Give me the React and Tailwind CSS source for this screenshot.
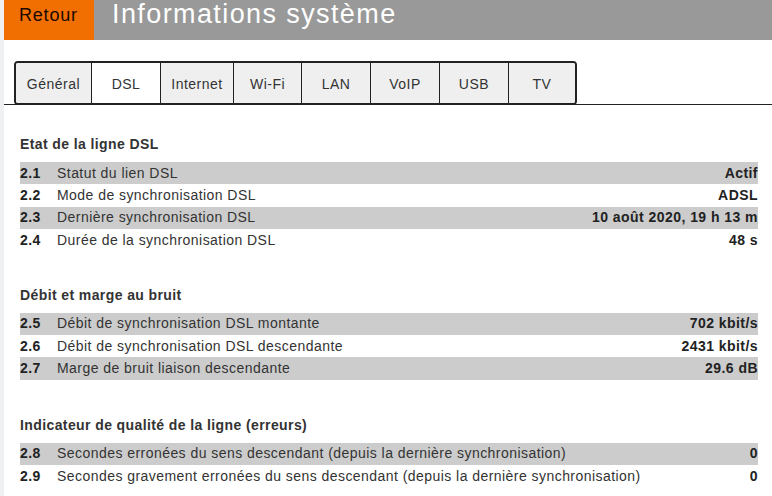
import React from "react";

const tabs = [
  { name: "Général", w: "w-[75px]" },
  { name: "DSL", w: "w-[69px]", active: true },
  { name: "Internet", w: "w-[73px]" },
  { name: "Wi-Fi", w: "w-[68px]" },
  { name: "LAN", w: "w-[69px]" },
  { name: "VoIP", w: "w-[69px]" },
  { name: "USB", w: "w-[69px]" },
  { name: "TV", w: "w-[67px]" },
];

const sections = [
  {
    title: "Etat de la ligne DSL",
    mt: "mt-[31px]",
    rows: [
      ["2.1", "Statut du lien DSL", "Actif"],
      ["2.2", "Mode de synchronisation DSL", "ADSL"],
      ["2.3", "Dernière synchronisation DSL", "10 août 2020, 19 h 13 m"],
      ["2.4", "Durée de la synchronisation DSL", "48 s"],
    ],
  },
  {
    title: "Débit et marge au bruit",
    mt: "mt-[35px]",
    rows: [
      ["2.5", "Débit de synchronisation DSL montante", "702 kbit/s"],
      ["2.6", "Débit de synchronisation DSL descendante", "2431 kbit/s"],
      ["2.7", "Marge de bruit liaison descendante", "29.6 dB"],
    ],
  },
  {
    title: "Indicateur de qualité de la ligne (erreurs)",
    mt: "mt-[37px]",
    rows: [
      ["2.8", "Secondes erronées du sens descendant (depuis la dernière synchronisation)", "0"],
      ["2.9", "Secondes gravement erronées du sens descendant (depuis la dernière synchronisation)", "0"],
    ],
  },
];

export default function App() {
  return (
    <div
      className="flex w-[772px] h-[496px] overflow-hidden bg-white text-[#333]"
      style={{ fontFamily: '"Liberation Sans", Arial, sans-serif' }}
    >
      <div className="w-[4px] shrink-0 bg-[#eef0f2]" />
      <div className="flex-1 flex flex-col">
        <div className="flex h-[40px] bg-[#999999]">
          <div className="w-[90px] bg-[#f16e00] pl-[15px] pt-[6px] text-[18px] leading-none tracking-[0.8px] text-[#1a0a00]">
            Retour
          </div>
          <div className="pl-[18px] pt-[1px] text-[27px] leading-none tracking-[1.4px] text-white">
            Informations système
          </div>
        </div>
        <div className="mt-[21px] border-b border-[#222] pl-[10px] flex">
          <div className="flex h-[44px] border-2 border-[#222] rounded-[4px] overflow-hidden -mb-px">
            {tabs.map((t, i) => (
              <div
                key={t.name}
                className={`${t.w} flex items-center justify-center pt-[3px] text-[14px] tracking-[0.5px] text-[#333] ${
                  t.active ? "bg-white" : "bg-[#efefef]"
                } ${i > 0 ? "border-l border-[#222]" : ""}`}
              >
                {t.name}
              </div>
            ))}
          </div>
        </div>
        <div className="pl-[16px] pr-[14px]">
          {sections.map((s) => (
            <div key={s.title} className={s.mt}>
              <div className="text-[14px] font-bold leading-[16px] tracking-[0.4px] mb-[10px] text-[#333]">
                {s.title}
              </div>
              <div>
                {s.rows.map((r, ri) => (
                  <div
                    key={r[0]}
                    className={`flex items-center h-[22.4px] text-[14px] tracking-[0.45px] ${
                      ri % 2 === 0 ? "bg-[#cccccc]" : ""
                    }`}
                  >
                    <div className="w-[37px] font-bold text-[#222]">{r[0]}</div>
                    <div className="flex-1 text-[#333]">{r[1]}</div>
                    <div className="font-bold text-[#222]">{r[2]}</div>
                  </div>
                ))}
              </div>
            </div>
          ))}
        </div>
      </div>
    </div>
  );
}
